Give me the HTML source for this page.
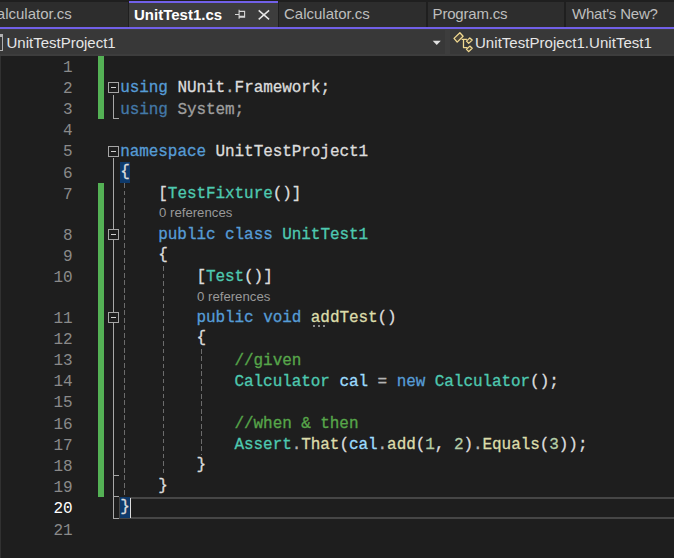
<!DOCTYPE html>
<html lang="en">
<head>
<meta charset="utf-8">
<title>UnitTest1.cs</title>
<style>
html,body{margin:0;padding:0;}
body{width:674px;height:558px;overflow:hidden;background:#1e1e1e;position:relative;font-family:"Liberation Sans",sans-serif;}
.abs{position:absolute;}
#topstrip{left:0;top:0;width:674px;height:27px;background:#1f1f1f;}
.tab{position:absolute;top:2px;height:25px;background:#2d2d2d;color:#bebebe;font-size:15px;line-height:25px;white-space:nowrap;overflow:hidden;}
.tab span{position:absolute;top:-1.2px;}
.tab.active{top:1px;height:26px;background:#3d3d3d;color:#ffffff;font-weight:bold;border-top:2px solid #7160e8;box-sizing:border-box;}
#accent{left:0;top:27px;width:674px;height:2px;background:#7160e8;}
#nav{left:0;top:29px;width:674px;height:27px;background:#3d3d3d;}
.combo{position:absolute;top:1px;height:24px;background:#383838;color:#e6e6e6;font-size:15px;line-height:24px;white-space:nowrap;overflow:hidden;}
.combo span{position:absolute;top:0.8px;}
#editor{left:0;top:56px;width:674px;height:502px;background:#1e1e1e;}
.ln{position:absolute;left:0;width:72.5px;text-align:right;color:#8a8a8a;font-family:"Liberation Mono",monospace;white-space:pre;}
.ln.cur{color:#ffffff;}
.code{position:absolute;white-space:pre;font-family:"Liberation Mono",monospace;color:#dcdcdc;-webkit-text-stroke:0.3px currentColor;}
.k{color:#569cd6}.t{color:#4ec9b0}.m{color:#dcdcaa}.v{color:#9cdcfe}.n{color:#b5cea8}.c{color:#57a64a}
.p{color:#dcdcdc}.o{color:#b4b4b4}.w{color:#dcdcdc}
.kd{color:#4479a8}.wd{color:#9e9e9e}
.bm{color:#dcdcdc;}
.br{position:relative;top:-1.5px;}
.hl{position:absolute;background:#0e3a6c;}
.lens{position:absolute;color:#999999;font-size:13.2px;white-space:nowrap;font-family:"Liberation Sans",sans-serif;}
.green{position:absolute;left:98px;width:6.4px;background:#54b155;}
.vline{position:absolute;width:1.5px;background:#a8a8a8;}
.hline{position:absolute;height:1px;background:#a5a5a5;}
.guide{position:absolute;width:1.3px;background:repeating-linear-gradient(to bottom,#6c6c6c 0,#6c6c6c 4.8px,transparent 4.8px,transparent 7.5px);}
.box{position:absolute;width:9px;height:9px;border:1px solid #a5a5a5;background:#1e1e1e;}
.box i{position:absolute;left:2px;top:4px;width:5px;height:1px;background:#d0d0d0;}
</style>
</head>
<body>

<div id="topstrip" class="abs"></div>
<div class="tab" style="left:0;width:128px;"><span style="left:-14px;">Calculator.cs</span></div>
<div class="tab active" style="left:129px;width:149px;"><span style="left:5px;top:-1.3px;">UnitTest1.cs</span><svg style="position:absolute;left:105px;top:5px" width="13" height="12" viewBox="0 0 13 12"><path d="M1 6.5H5.1" stroke="#d6d6d6" stroke-width="1" fill="none"/><path d="M5.1 1.8V10.7M5.1 3.4H10.6V9.3H5.1M5.1 8.3H10.6" stroke="#d6d6d6" stroke-width="1.1" fill="none"/></svg><svg style="position:absolute;left:129px;top:6px" width="12" height="12" viewBox="0 0 12 12"><path d="M0.7 1.4L11.1 10.4M11.1 1.4L0.7 10.4" stroke="#e6e6e6" stroke-width="1.5" fill="none"/></svg></div>
<div class="tab" style="left:279px;width:147px;"><span style="left:5px;">Calculator.cs</span></div>
<div class="tab" style="left:428px;width:136px;"><span style="left:4.6px;letter-spacing:-0.2px;">Program.cs</span></div>
<div class="tab" style="left:566px;width:108px;"><span style="left:6px;letter-spacing:-0.2px;">What's New?</span></div>
<div id="accent" class="abs"></div>
<div id="nav" class="abs">
<div class="combo" style="left:0;width:445px;"><span style="left:6.5px;">UnitTestProject1</span><div class="abs" style="left:-9px;top:4px;width:10px;height:13px;border:1px solid #b0b0b0;border-top:3px solid #b0b0b0;"></div><svg style="position:absolute;left:432px;top:10px" width="10" height="6" viewBox="0 0 10 6"><path d="M0.7 0.8H8.8L4.75 5Z" fill="#e0e0e0"/></svg></div>
<div class="combo" style="left:450px;width:224px;"><span style="left:25px;letter-spacing:0.04px;">UnitTestProject1.UnitTest1</span><svg style="position:absolute;left:0px;top:-1px" width="26" height="27" viewBox="0 0 26 27" fill="#4a4438" stroke="#f0d890" stroke-width="1.3" stroke-linejoin="round"><path d="M11.6 10.4H16.9M13.5 10.4V18.6H17.4" fill="none"/><path d="M9.9 3.8L13.1 7.3L7.2 13.1L4 9.4Z"/><path d="M19.8 8.9L22.2 11.1L18.7 14.4L16.5 12.1Z"/><path d="M19.8 17.1L22.2 19.3L18.7 22.6L16.5 20.3Z"/></svg></div>
</div>
<div id="editor" class="abs"></div>
<div class="abs" style="left:0;top:56px;width:1px;height:502px;background:#313131;"></div>
<div class="green" style="top:55.70px;height:63.51px;"></div>
<div class="green" style="top:182.72px;height:314.61px;"></div>
<div class="abs" style="left:119px;top:497.23px;width:560px;height:17.57px;border:2.2px solid #464646;"></div>
<div class="hl" style="left:120px;top:161.55px;width:9.8px;height:21.17px;"></div>
<div class="hl" style="left:120px;top:497.33px;width:9.8px;height:21.17px;"></div>
<div class="vline" style="left:112.7px;top:94.87px;height:24.34px;"></div>
<div class="hline" style="left:112.7px;top:118.21px;width:6px;"></div>
<div class="vline" style="left:112.7px;top:158.38px;height:360.12px;"></div>
<div class="hline" style="left:112.7px;top:475.16px;width:6px;"></div>
<div class="hline" style="left:112.7px;top:496.33px;width:6px;"></div>
<div class="hline" style="left:112.7px;top:517.50px;width:6px;"></div>
<div class="box" style="left:108px;top:82.37px;"><i></i></div>
<div class="box" style="left:108px;top:145.88px;"><i></i></div>
<div class="box" style="left:108px;top:229.09px;"><i></i></div>
<div class="box" style="left:108px;top:312.30px;"><i></i></div>
<div class="guide" style="left:123.6px;top:182.72px;height:314.61px;"></div>
<div class="guide" style="left:162.8px;top:265.93px;height:210.23px;"></div>
<div class="guide" style="left:200.8px;top:349.14px;height:105.85px;"></div>
<div class="ln" style="top:57.70px;height:21.17px;line-height:21.17px;font-size:16.0px;letter-spacing:-0.07px;">1</div>
<div class="ln" style="top:78.87px;height:21.17px;line-height:21.17px;font-size:16.0px;letter-spacing:-0.07px;">2</div>
<div class="code" style="left:120.20px;top:78.37px;height:21.17px;line-height:21.17px;font-size:16.0px;letter-spacing:-0.07px;"><span class="k">using</span><span class="w"> NUnit</span><span class="o">.</span><span class="w">Framework</span><span class="p">;</span></div>
<div class="ln" style="top:100.04px;height:21.17px;line-height:21.17px;font-size:16.0px;letter-spacing:-0.07px;">3</div>
<div class="code" style="left:120.20px;top:99.54px;height:21.17px;line-height:21.17px;font-size:16.0px;letter-spacing:-0.07px;"><span class="kd">using</span><span class="wd"> System;</span></div>
<div class="ln" style="top:121.21px;height:21.17px;line-height:21.17px;font-size:16.0px;letter-spacing:-0.07px;">4</div>
<div class="ln" style="top:142.38px;height:21.17px;line-height:21.17px;font-size:16.0px;letter-spacing:-0.07px;">5</div>
<div class="code" style="left:120.20px;top:141.88px;height:21.17px;line-height:21.17px;font-size:16.0px;letter-spacing:-0.07px;"><span class="k">namespace</span><span class="w"> UnitTestProject1</span></div>
<div class="ln" style="top:163.55px;height:21.17px;line-height:21.17px;font-size:16.0px;letter-spacing:-0.07px;">6</div>
<div class="code" style="left:120.20px;top:163.05px;height:21.17px;line-height:21.17px;font-size:16.0px;letter-spacing:-0.07px;"><span class="bm br">{</span></div>
<div class="ln" style="top:184.72px;height:21.17px;line-height:21.17px;font-size:16.0px;letter-spacing:-0.07px;">7</div>
<div class="code" style="left:158.30px;top:184.22px;height:21.17px;line-height:21.17px;font-size:16.0px;letter-spacing:-0.07px;"><span class="p">[</span><span class="t">TestFixture</span><span class="p">()]</span></div>
<div class="ln" style="top:225.59px;height:21.17px;line-height:21.17px;font-size:16.0px;letter-spacing:-0.07px;">8</div>
<div class="code" style="left:158.30px;top:225.09px;height:21.17px;line-height:21.17px;font-size:16.0px;letter-spacing:-0.07px;"><span class="k">public</span><span class="w"> </span><span class="k">class</span><span class="w"> </span><span class="t">UnitTest1</span></div>
<div class="ln" style="top:246.76px;height:21.17px;line-height:21.17px;font-size:16.0px;letter-spacing:-0.07px;">9</div>
<div class="code" style="left:158.30px;top:246.26px;height:21.17px;line-height:21.17px;font-size:16.0px;letter-spacing:-0.07px;"><span class="p br">{</span></div>
<div class="ln" style="top:267.93px;height:21.17px;line-height:21.17px;font-size:16.0px;letter-spacing:-0.07px;">10</div>
<div class="code" style="left:196.40px;top:267.43px;height:21.17px;line-height:21.17px;font-size:16.0px;letter-spacing:-0.07px;"><span class="p">[</span><span class="t">Test</span><span class="p">()]</span></div>
<div class="ln" style="top:308.80px;height:21.17px;line-height:21.17px;font-size:16.0px;letter-spacing:-0.07px;">11</div>
<div class="code" style="left:196.40px;top:308.30px;height:21.17px;line-height:21.17px;font-size:16.0px;letter-spacing:-0.07px;"><span class="k">public</span><span class="w"> </span><span class="k">void</span><span class="w"> </span><span class="m">addTest</span><span class="p">()</span></div>
<div class="ln" style="top:329.97px;height:21.17px;line-height:21.17px;font-size:16.0px;letter-spacing:-0.07px;">12</div>
<div class="code" style="left:196.40px;top:329.47px;height:21.17px;line-height:21.17px;font-size:16.0px;letter-spacing:-0.07px;"><span class="p br">{</span></div>
<div class="ln" style="top:351.14px;height:21.17px;line-height:21.17px;font-size:16.0px;letter-spacing:-0.07px;">13</div>
<div class="code" style="left:234.50px;top:350.64px;height:21.17px;line-height:21.17px;font-size:16.0px;letter-spacing:-0.07px;"><span class="c">//given</span></div>
<div class="ln" style="top:372.31px;height:21.17px;line-height:21.17px;font-size:16.0px;letter-spacing:-0.07px;">14</div>
<div class="code" style="left:234.50px;top:371.81px;height:21.17px;line-height:21.17px;font-size:16.0px;letter-spacing:-0.07px;"><span class="t">Calculator</span><span class="w"> </span><span class="v">cal</span><span class="w"> </span><span class="o">=</span><span class="w"> </span><span class="k">new</span><span class="w"> </span><span class="t">Calculator</span><span class="p">();</span></div>
<div class="ln" style="top:393.48px;height:21.17px;line-height:21.17px;font-size:16.0px;letter-spacing:-0.07px;">15</div>
<div class="ln" style="top:414.65px;height:21.17px;line-height:21.17px;font-size:16.0px;letter-spacing:-0.07px;">16</div>
<div class="code" style="left:234.50px;top:414.15px;height:21.17px;line-height:21.17px;font-size:16.0px;letter-spacing:-0.07px;"><span class="c">//when &amp; then</span></div>
<div class="ln" style="top:435.82px;height:21.17px;line-height:21.17px;font-size:16.0px;letter-spacing:-0.07px;">17</div>
<div class="code" style="left:234.50px;top:435.32px;height:21.17px;line-height:21.17px;font-size:16.0px;letter-spacing:-0.07px;"><span class="t">Assert</span><span class="o">.</span><span class="m">That</span><span class="p">(</span><span class="v">cal</span><span class="o">.</span><span class="m">add</span><span class="p">(</span><span class="n">1</span><span class="p">,</span><span class="w"> </span><span class="n">2</span><span class="p">)</span><span class="o">.</span><span class="m">Equals</span><span class="p">(</span><span class="n">3</span><span class="p">));</span></div>
<div class="ln" style="top:456.99px;height:21.17px;line-height:21.17px;font-size:16.0px;letter-spacing:-0.07px;">18</div>
<div class="code" style="left:196.40px;top:456.49px;height:21.17px;line-height:21.17px;font-size:16.0px;letter-spacing:-0.07px;"><span class="p br">}</span></div>
<div class="ln" style="top:478.16px;height:21.17px;line-height:21.17px;font-size:16.0px;letter-spacing:-0.07px;">19</div>
<div class="code" style="left:158.30px;top:477.66px;height:21.17px;line-height:21.17px;font-size:16.0px;letter-spacing:-0.07px;"><span class="p br">}</span></div>
<div class="ln cur" style="top:499.33px;height:21.17px;line-height:21.17px;font-size:16.0px;letter-spacing:-0.07px;">20</div>
<div class="code" style="left:120.20px;top:498.83px;height:21.17px;line-height:21.17px;font-size:16.0px;letter-spacing:-0.07px;"><span class="bm br">}</span></div>
<div class="ln" style="top:520.50px;height:21.17px;line-height:21.17px;font-size:16.0px;letter-spacing:-0.07px;">21</div>
<div class="lens" style="left:159px;top:203.39px;line-height:19.7px;">0 references</div>
<div class="lens" style="left:197px;top:286.60px;line-height:19.7px;">0 references</div>
<div class="abs" style="left:313px;top:324.57px;width:2px;height:2px;background:#8c8c8c;"></div>
<div class="abs" style="left:318px;top:324.57px;width:2px;height:2px;background:#8c8c8c;"></div>
<div class="abs" style="left:323px;top:324.57px;width:2px;height:2px;background:#8c8c8c;"></div>
<div class="abs" style="left:129.6px;top:497.83px;width:1.5px;height:20.17px;background:#dcdcdc;"></div>
</body>
</html>
